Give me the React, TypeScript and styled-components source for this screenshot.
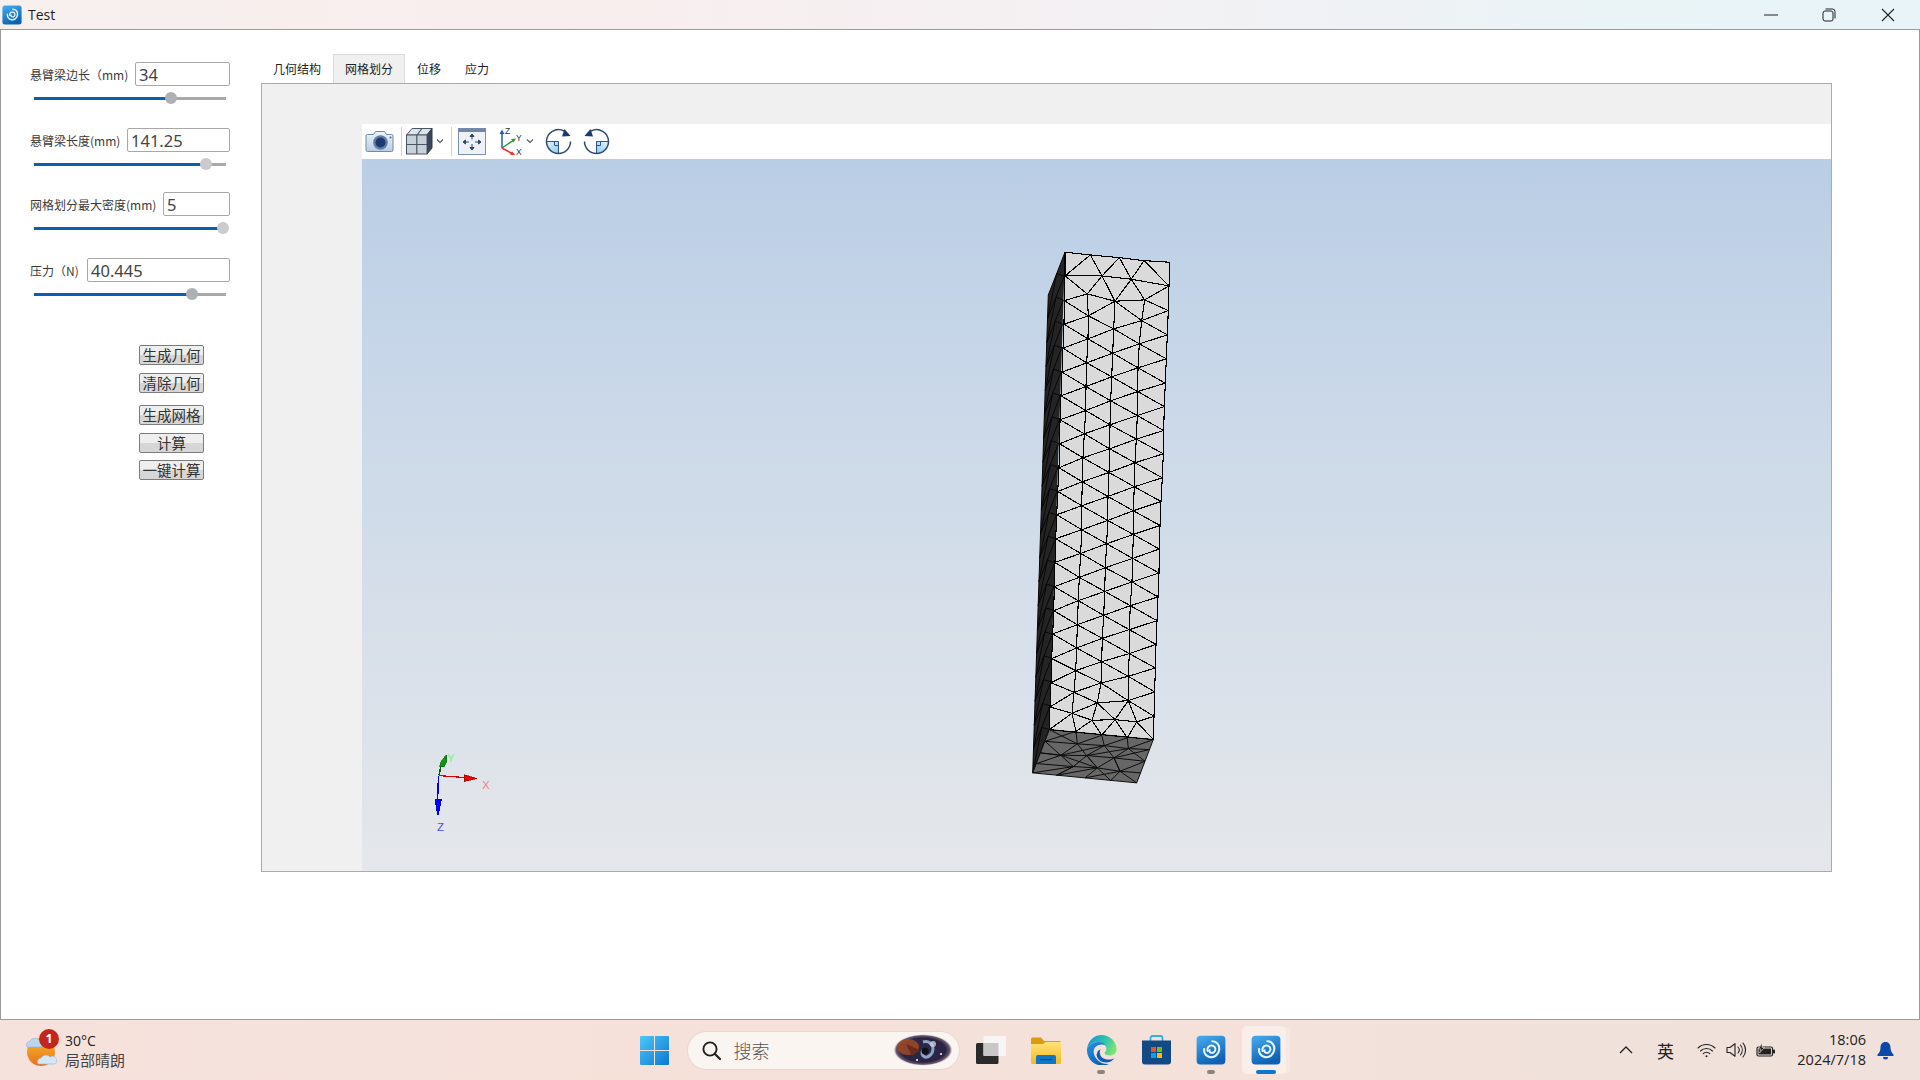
import React from "react";
import styled, { createGlobalStyle } from "styled-components";

const GlobalStyle = createGlobalStyle`
  html, body { margin: 0; padding: 0; width: 1920px; height: 1080px; overflow: hidden; background: #fff; }
  * { box-sizing: border-box; }
  body { font-family: "Noto Sans CJK SC", "Noto Sans", sans-serif; color: #222; }
`;

const Page = styled.div`
  width: 1920px; height: 1080px; display: flex; flex-direction: column;
`;
const TitleBar = styled.header`
  height: 29px; flex: none; display: flex; align-items: center; padding: 0 3px 0 2px;
  background: linear-gradient(90deg, #f7f0ed 0%, #f9eeee 30%, #f3f1f4 60%, #e8f4f7 90%, #e8f4f7 100%);
`;
const TitleText = styled.span`
  font: 14px "Open Sans", "Noto Sans", sans-serif; color: #1c1c1c; margin-left: 6px; flex: 1;
`;
const WinButton = styled.div`
  width: 58.5px; height: 29px; display: flex; align-items: center; justify-content: center;
`;
const Window = styled.div`
  flex: 1; min-height: 0; display: flex; background: #fff;
  border: 1px solid #9b9b9b; border-top-width: 1.5px; border-bottom-width: 1.5px;
`;
const Sidebar = styled.aside`
  width: 260px; flex: none; padding: 32px 31px 0 29px;
`;
const ParamGroup = styled.div<{ $top: number }>`
  margin-top: ${(p) => p.$top}px; height: 42px; display: flex; flex-direction: column;
`;
const ParamRow = styled.label`
  display: flex; align-items: center; height: 24px; flex: none;
`;
const ParamLabel = styled.span<{ $w: number }>`
  width: ${(p) => p.$w}px; flex: none; font-size: 12px; color: #3a3a3a; white-space: nowrap;
`;
const ParamInput = styled.input`
  flex: 1; min-width: 0; height: 24px; border: 1px solid #a8a8a8; border-radius: 2px; background: #fff;
  padding: 0 3px; font: 16.5px "Noto Sans", sans-serif; color: #444; outline: none;
`;
const SliderTrack = styled.div`
  margin: 5px -3px 0 4px; height: 14px; display: flex; align-items: center; flex: none; width: 192px;
  background: linear-gradient(#a9a9a9, #a9a9a9) center / 100% 3px no-repeat;
`;
const SliderFill = styled.div`
  height: 3px; background: #0b5fb0; flex: none;
`;
const SliderThumb = styled.div<{ $light?: boolean }>`
  width: 12px; height: 12px; border-radius: 50%; flex: none; margin-left: -6px;
  background: ${(p) => (p.$light ? "#cbcbcb" : "#adb1b5")};
`;
const ButtonStack = styled.div`
  display: flex; flex-direction: column; align-items: flex-start; margin-left: 109px; margin-top: 45px;
`;
const ActionButton = styled.button<{ $top: number }>`
  width: 65px; height: 20px; margin-top: ${(p) => p.$top}px; padding: 0; flex: none;
  border: 1px solid #7c7c7c; border-radius: 2px; white-space: nowrap; overflow: hidden;
  background: linear-gradient(#eeeeee 0%, #eeeeee 50%, #d6d6d6 50%, #d6d6d6 100%);
  font: 14.5px/18px "Noto Sans CJK SC", sans-serif; color: #333;
`;
const Main = styled.main`
  width: 1571px; flex: none; display: flex; flex-direction: column; padding-top: 23.5px; height: 842px;
`;
const TabBar = styled.nav`
  display: flex; height: 29px; flex: none;
`;
const Tab = styled.div<{ $active?: boolean }>`
  padding: 0 ${(p) => (p.$active ? 11 : 12)}px; height: 29px; display: flex; align-items: center;
  font-size: 12px; color: #222; white-space: nowrap;
  background: ${(p) => (p.$active ? "#f0f0f0" : "transparent")};
  border: ${(p) => (p.$active ? "1px solid #dcdcdc" : "none")};
  border-bottom: none;
`;
const TabPanel = styled.section`
  flex: 1; min-height: 0; background: #f0f0f0; border: 1px solid #ababab;
  padding: 40px 0 0 100px; display: flex;
`;
const Viewer = styled.div`
  flex: 1; min-width: 0; display: flex; flex-direction: column;
`;
const Toolbar = styled.div`
  height: 35px; flex: none; background: #fff; display: flex; align-items: center;
`;
const ToolIcon = styled.div<{ $w: number; $ml?: number }>`
  width: ${(p) => p.$w}px; margin-left: ${(p) => p.$ml ?? 0}px; height: 30px; flex: none;
  display: flex; align-items: center; justify-content: center;
`;
const ToolSep = styled.div<{ $ml: number }>`
  width: 1px; height: 29px; background: #cfd3d8; flex: none; margin-left: ${(p) => p.$ml}px;
`;
const Canvas = styled.div`
  flex: 1; min-height: 0; background: linear-gradient(#b9cde5 0%, #c6d6e8 25%, #e5e7eb 100%);
`;
const CanvasSvg = styled.svg`
  display: block; width: 100%; height: 100%;
`;
const Taskbar = styled.footer`
  height: 60px; flex: none; display: flex; align-items: center;
  background: linear-gradient(90deg, #f6e2dc 0%, #f5e1da 45%, #f0e1dc 100%);
`;
const Weather = styled.div`
  width: 626.5px; flex: none; padding-left: 25px; display: flex; align-items: center; height: 100%;
`;
const WeatherIconWrap = styled.div`
  position: relative; width: 34px; height: 36px; margin-right: 6px; flex: none;
`;
const Badge = styled.span`
  position: absolute; left: 14px; top: -3px; width: 20px; height: 20px; border-radius: 50%;
  background: #c4261d; color: #fff; font: 700 12.5px/20px "Open Sans", sans-serif; text-align: center;
`;
const WeatherText = styled.div`
  display: flex; flex-direction: column; line-height: 19px;
`;
const WeatherTemp = styled.span`
  font: 14px/19px "Open Sans", sans-serif; color: #222;
`;
const WeatherDesc = styled.span`
  font-size: 15px; line-height: 19px; color: #444;
`;
const Slot = styled.div`
  position: relative; width: 55px; height: 48px; flex: none;
  display: flex; align-items: center; justify-content: center;
  & > svg { position: relative; }
`;
const ActivePlate = styled.span`
  position: absolute; left: 3.5px; top: 0; width: 44px; height: 48px; border-radius: 5px; background: #f9eeea;
  box-shadow: 5px 0 0 -1px #f5e8e3;
`;
const Indicator = styled.span<{ $active?: boolean }>`
  position: absolute; left: 50%; bottom: 0; height: 4px;
  width: ${(p) => (p.$active ? 20 : 8)}px; margin-left: ${(p) => (p.$active ? -10 : -4)}px; border-radius: 2px;
  background: ${(p) => (p.$active ? "#0b78d1" : "#8a8584")};
`;
const SearchBox = styled.div`
  width: 273px; height: 39px; margin: 0 4px 0 5px; flex: none; border-radius: 20px;
  background: #fbf5f2; border: 1px solid #e9d5d0; display: flex; align-items: center; padding: 0 6px 0 14px;
`;
const SearchText = styled.span`
  font-size: 18px; font-weight: 300; color: #555; margin-left: 13px; flex: 1;
`;
const Tray = styled.div`
  margin-left: auto; display: flex; align-items: center; height: 100%; padding-right: 16px;
`;
const TraySlot = styled.div<{ $w: number; $mr?: number }>`
  width: ${(p) => p.$w}px; margin-right: ${(p) => p.$mr ?? 0}px; flex: none;
  display: flex; align-items: center; justify-content: center;
`;
const TrayLang = styled.span`
  font-size: 17px; color: #222; line-height: 1;
`;
const Clock = styled.div`
  display: flex; flex-direction: column; align-items: flex-end; margin-left: 13px; width: 72px;
  font: 14.5px/20px "Open Sans", sans-serif; color: #222;
`;

/* ---- mesh data, measured in 3x units from the model's top-left crop ---- */
type P = [number, number];
const L: P[] = [[135,108],[133,182],[132,253],[129,325],[126,397],[123,468],[120,540],[119,612],[117,684],[113,755],[110,825],[107,897],[105,968],[103,1041],[101,1113],[98,1183],[95,1257],[93,1329],[90,1402],[88,1470]];
const C1: P[] = [[202,162],[205,228],[204,297],[200,369],[198,440],[197,512],[193,582],[189,654],[187,726],[185,798],[185,870],[182,941],[178,1013],[175,1083],[172,1155],[170,1225],[167,1293],[162,1358],[156,1421]];
const C2: P[] = [[285,184],[281,267],[278,340],[275,411],[272,483],[270,555],[269,627],[267,698],[264,770],[263,842],[260,912],[256,984],[254,1055],[251,1127],[247,1196],[245,1266],[243,1330],[232,1390]];
const C3: P[] = [[374,180],[365,242],[358,312],[354,384],[353,455],[352,527],[349,598],[345,669],[343,741],[340,813],[340,884],[338,956],[336,1027],[331,1098],[328,1170],[328,1242],[325,1310],[325,1383]];
const R: P[] = [[447,138],[445,212],[442,285],[439,357],[436,430],[433,500],[431,572],[430,642],[427,714],[423,785],[420,857],[418,928],[417,1000],[414,1072],[411,1143],[408,1214],[406,1285],[404,1357],[402,1430],[400,1500]];
const TL: P = [135,37], TR: P = [449,67], BL: P = [88,1470], BR: P = [400,1500], BBR: P = [350,1630], BBL: P = [38,1600], SIDE_T: P = [85,165];

const frontLines: [P, P][] = [];
const poly = (ps: P[]) => { for (let i = 0; i < ps.length - 1; i++) frontLines.push([ps[i], ps[i + 1]]); };
poly([TL,[211,45],[298,53],[372,62],TR]);
poly([L[0],[211,45],[246,108],[298,53],[334,118],[372,62],R[0],TR]);
poly([L[0],[246,108],[334,118],R[0]]);
poly([L[0],C1[0],[246,108],C2[0],[334,118],C3[0],R[0]]);
poly([TL, ...L]);
poly(R); poly(C1); poly(C2); poly(C3);
for (let i = 1; i < C1.length; i++) { frontLines.push([L[i], C1[i - 1]]); frontLines.push([L[i], C1[i]]); }
for (let i = 0; i < C2.length; i++) { frontLines.push([C1[i], C2[i]]); frontLines.push([C1[i + 1], C2[i]]); }
for (let i = 0; i < C2.length; i++) { frontLines.push([C2[i], C3[i]]); if (C3[i + 1]) frontLines.push([C2[i], C3[i + 1]]); }
for (let i = 0; i < C3.length; i++) { frontLines.push([C3[i], R[i]]); frontLines.push([C3[i], R[i + 1]]); }
const F1: P = [216,1442], F2: P = [285,1440], F3: P = [350,1447], B1: P = [168,1475], B2: P = [245,1487], B3: P = [322,1495];
const C1e = C1[18], C2e = C2[17], C3e = C3[17];
poly([BL, C1e, F1, F2, F3, R[18]]);
poly([C2e, F1]); poly([C2e, F2]); poly([C3e, F2]); poly([C3e, F3]);
poly([C1e, B1, F1, B2, F2, B3, F3, BR]);
poly([BL, BR]);

const bottomLines: [P, P][] = [];
const bpoly = (ps: P[]) => { for (let i = 0; i < ps.length - 1; i++) bottomLines.push([ps[i], ps[i + 1]]); };
const LE: P[] = [[75,1505],[62,1540],[50,1572]];
const RE: P[] = [[388,1530],[375,1565],[362,1600]];
const BE: P[] = [[110,1607],[195,1615],[272,1623]];
const M1: P[] = [[172,1513],[253,1518],[325,1527]];
const M2: P[] = [[122,1547],[200,1548],[282,1555]];
const M3: P[] = [[160,1581],[232,1585],[300,1595]];
bpoly([BL, BR, BBR, BBL, BL]);
bpoly([LE[0], ...M1, RE[0]]); bpoly([LE[1], ...M2, RE[1]]); bpoly([LE[2], ...M3, RE[2]]);
bpoly([B1, M1[0], M2[0], M3[0], BE[0]]);
bpoly([B2, M1[1], M2[1], M3[1], BE[1]]);
bpoly([B3, M1[2], M2[2], M3[2], BE[2]]);
bpoly([BL, M1[0], B2]); bpoly([B1, LE[0]]); bpoly([B3, M1[1], M2[0], LE[1]]);
bpoly([BR, M1[2], M2[1], M3[0], BE[0]]); bpoly([RE[0], M2[2], M3[1], BE[0]]); bpoly([RE[1], M3[2], BE[1]]);
bpoly([M1[0], M2[1], M3[1], BE[2]]); bpoly([M1[1], M2[2], M3[2], BBR]); bpoly([M1[2], RE[1]]);
bpoly([LE[0], M2[0], M3[1]]); bpoly([LE[2], M2[0]]); bpoly([M3[0], BBL]);

const sideLines: [P, P][] = [];
for (let i = 0; i < 21; i++) {
  const t = i / 20;
  const a: P = [85 + (38 - 85) * t, 165 + (1600 - 165) * t];
  const b: P = [135 + (88 - 135) * t, 37 + (1470 - 37) * t];
  const m: P = [(a[0] + b[0]) / 2, (a[1] + b[1]) / 2];
  const t2 = Math.min(1, t + 0.05);
  const b2: P = [135 + (88 - 135) * t2, 37 + (1470 - 37) * t2];
  const a2: P = [85 + (38 - 85) * t2, 165 + (1600 - 165) * t2];
  sideLines.push([a, m], [m, b], [m, a2], [m, b2]);
}
sideLines.push([SIDE_T, BBL]);

/* canvas origin is (362,159); crop origin is (1020,240) at 3x */
const X = (p: P) => 658 + p[0] / 3;
const Y = (p: P) => 81 + p[1] / 3;
const pts = (ps: P[]) => ps.map((p) => `${X(p).toFixed(1)},${Y(p).toFixed(1)}`).join(" ");
const seg = (ls: [P, P][]) => ls.map(([a, b]) => `M${X(a).toFixed(1)} ${Y(a).toFixed(1)}L${X(b).toFixed(1)} ${Y(b).toFixed(1)}`).join("");

const MeshScene = () => (
  <CanvasSvg viewBox="0 0 1469 713" preserveAspectRatio="none">
    <polygon points={pts([TL, BL, BBL, SIDE_T])} fill="#242424" />
    <path d={seg(sideLines)} stroke="#070707" strokeWidth="1" fill="none" shapeRendering="crispEdges" />
    <polygon points={pts([TL, TR, ...R, BL, ...L.slice().reverse()])} fill="#dadada" />
    <polygon points={pts([BL, BR, BBR, BBL])} fill="#676767" />
    <path d={seg(bottomLines)} stroke="#0d0d0d" strokeWidth="1" fill="none" shapeRendering="crispEdges" />
    <path d={seg(frontLines)} stroke="#000" strokeWidth="1.1" fill="none" shapeRendering="crispEdges" />
    {/* orientation triad */}
    <g shapeRendering="crispEdges">
      <path d="M77 617 L79 607" stroke="#0a5a0a" strokeWidth="1.6" fill="none" />
      <path d="M77.500 608 L79 603 L84.500 596 L85 603 L82 608 Z" fill="#0a9a12" stroke="#075c0a" strokeWidth=".6" />
      <path d="M77 617 L103 619" stroke="#e00000" strokeWidth="1.200" fill="none" />
      <path d="M102 616 L115 620 L102 623 Z" fill="#ee0000" stroke="#8c0000" strokeWidth=".6" />
      <path d="M76.500 617 L75.500 645" stroke="#0000e0" strokeWidth="1.400" fill="none" />
      <path d="M72.500 640 L80 640 L78 650 L76 658 L74 650 Z" fill="#0000f0" />
    </g>
    <text x="85" y="603" fill="#80ee80" fontFamily="Liberation Sans, sans-serif" fontSize="11.500">Y</text>
    <text x="120" y="630" fill="#f08080" fontFamily="Liberation Sans, sans-serif" fontSize="11.500">X</text>
    <text x="75" y="672" fill="#4a4aff" fontFamily="Liberation Sans, sans-serif" fontSize="11.500">Z</text>
  </CanvasSvg>
);

/* ---- icons ---- */
const AppIcon = ({ size, bright }: { size: number; bright?: boolean }) => {
  const id = bright ? "appB" : "appA";
  return (
    <svg width={size} height={size} viewBox="0 0 24 24">
      <defs>
        <linearGradient id={id} x1="0" y1="0" x2=".4" y2="1">
          <stop offset="0" stopColor="#49aef0" />
          <stop offset="1" stopColor="#0d62b4" />
        </linearGradient>
      </defs>
      <rect x="0.500" y="0.500" width="23" height="23" rx="3" fill={`url(#${id})`} />
      <path d="M13 5c3.500 0 6 3 5.600 6.600-.4 3.900-3.700 6.700-7.300 6.100-3.200-.5-5.300-3.300-4.800-6.500" fill="none" stroke="#e8f4fd" strokeWidth="1.700" strokeLinecap="round" />
      <path d="M9.300 12.800c-.7-2.300.9-4.400 3.100-4.400 2.100 0 3.400 1.700 3.100 3.500-.3 1.800-2.100 2.900-3.700 2.200-.9-.4-1.300-1.300-.9-2" fill="none" stroke="#f0f8fe" strokeWidth="1.500" strokeLinecap="round" />
    </svg>
  );
};

const CameraIcon = () => (
  <svg width="30" height="26" viewBox="0 0 30 26">
    <defs>
      <linearGradient id="cam" x1="0" y1="0" x2="0" y2="1"><stop offset="0" stopColor="#eef3f9" /><stop offset="1" stopColor="#b9cde3" /></linearGradient>
    </defs>
    <path d="M2.500 6.500h6l2-3h9l2 3h5a1.500 1.500 0 0 1 1.500 1.500v14a1.500 1.500 0 0 1-1.500 1.500h-24a1.500 1.500 0 0 1-1.500-1.500v-14a1.500 1.500 0 0 1 1.500-1.500z" fill="url(#cam)" stroke="#6d8bb0" />
    <circle cx="15.500" cy="14.500" r="7.300" fill="#5f7fa8" />
    <circle cx="15.500" cy="14.500" r="5" fill="#1c3a70" />
    <circle cx="25.500" cy="9.500" r="1" fill="#45668f" />
  </svg>
);
const Chevron = () => (
  <svg width="8" height="6" viewBox="0 0 8 6"><path d="M1 1.500l3 3 3-3" fill="none" stroke="#4f5b68" strokeWidth="1.100" /></svg>
);
const CubeIcon = () => (
  <svg width="28" height="28" viewBox="0 0 28 28">
    <path d="M1.500 8L7 1.500h20L22 8z" fill="#dde3ea" stroke="#4a5563" />
    <path d="M22 8l5-6.500V21l-5 6z" fill="#39475a" stroke="#2e3a4a" />
    <rect x="1.500" y="8" width="20.500" height="19" fill="#c8d0d9" stroke="#4a5563" />
    <path d="M11.800 8v19M1.500 17.500H22M12 8l5-6.500" stroke="#4a5563" strokeWidth="1.200" fill="none" />
  </svg>
);
const FitIcon = () => (
  <svg width="28" height="28" viewBox="0 0 28 28">
    <rect x="0.500" y="1.500" width="27" height="26" fill="#eef2f7" stroke="#7a90ac" />
    <rect x="0.500" y="1.500" width="27" height="3.500" fill="#6f87a6" />
    <g fill="#2f4468" stroke="#2f4468" strokeWidth="1">
      <path d="M14 8.500v4M14 17v4M7 15h4M17 15h4" fill="none" />
      <path d="M14 7l-2 2.500h4zM14 23l-2-2.500h4zM5 15l2.500-2v4zM23 15l-2.500-2v4z" />
    </g>
  </svg>
);
const AxesIcon = () => (
  <svg width="26" height="30" viewBox="0 0 26 30">
    <path d="M4 22V7" stroke="#1f5fb5" strokeWidth="1.500" />
    <path d="M4 3.500L1.500 8h5z" fill="#1f5fb5" />
    <path d="M4 22l12-8" stroke="#2f9a3a" strokeWidth="1.500" />
    <path d="M18 12.500l-5 .5 2.500 3.500z" fill="#2f9a3a" />
    <path d="M4 22l11 6" stroke="#e03030" strokeWidth="1.500" />
    <path d="M17 29l-5-.3 2-3.400z" fill="#e03030" />
    <text x="7" y="8" fontSize="8.500" fontFamily="Liberation Sans, sans-serif" fill="#333">Z</text>
    <text x="18" y="15" fontSize="8.500" fontFamily="Liberation Sans, sans-serif" fill="#333">Y</text>
    <text x="18" y="29" fontSize="8.500" fontFamily="Liberation Sans, sans-serif" fill="#333">X</text>
  </svg>
);
const RotateIcon = ({ id, flip }: { id: string; flip?: boolean }) => (
  <svg width="27" height="27" viewBox="0 0 27 27" style={flip ? { transform: "scaleX(-1)" } : undefined}>
    <defs>
      <linearGradient id={id} x1="0" y1="0" x2="1" y2="1"><stop offset="0" stopColor="#e7f4fc" /><stop offset="1" stopColor="#8cc8ee" /></linearGradient>
    </defs>
    <path d="M1.500 13.500H13.500V25.500A12 12 0 0 1 1.500 13.500z" fill={`url(#${id})`} />
    <path d="M1.500 13.500H13.500V25.500M9.500 13.500v4h4" fill="none" stroke="#2a5a8c" strokeWidth="1" />
    <path d="M19 3A12 12 0 0 0 1.500 13.500A12 12 0 0 0 25.500 13.500" fill="none" stroke="#2c4a72" strokeWidth="1.500" />
    <path d="M25.500 8L17 8.500 19.500 1z" fill="#1c3a70" />
  </svg>
);
const WeatherIcon = () => (
  <svg width="34" height="36" viewBox="0 0 34 36">
    <defs>
      <linearGradient id="sun" x1="0" y1="0" x2="0" y2="1"><stop offset="0" stopColor="#f7b92c" /><stop offset="1" stopColor="#e9701c" /></linearGradient>
    </defs>
    <circle cx="16" cy="20" r="14" fill="url(#sun)" />
    <path d="M2 15a4 4 0 0 1 3-6 5.500 5.500 0 0 1 9-1 4 4 0 0 1 3 7z" fill="#bcd6ee" stroke="#8fb4d8" strokeWidth=".6" />
    <path d="M13 32a4 4 0 0 1 3-6 5.500 5.500 0 0 1 9-1 4 4 0 0 1 5 7z" fill="#d5e6f5" stroke="#92b8dc" strokeWidth=".6" />
  </svg>
);
const WinIcon = () => (
  <svg width="29" height="29" viewBox="0 0 29 29">
    <defs>
      <linearGradient id="w1" x1="0" y1="0" x2="1" y2="1"><stop offset="0" stopColor="#4cc8f8" /><stop offset="1" stopColor="#0a78d4" /></linearGradient>
    </defs>
    <path d="M0 1a1 1 0 0 1 1-1h13v14H0zM15 0h13a1 1 0 0 1 1 1v13H15zM0 15h14v14H1a1 1 0 0 1-1-1zM15 15h14v13a1 1 0 0 1-1 1H15z" fill="url(#w1)" />
  </svg>
);
const SearchIcon = () => (
  <svg width="19" height="19" viewBox="0 0 19 19"><circle cx="8" cy="8" r="6.600" fill="none" stroke="#222" strokeWidth="1.900" /><path d="M13 13l5 5" stroke="#222" strokeWidth="2.200" strokeLinecap="round" /></svg>
);
const SearchArt = () => (
  <svg width="60" height="32" viewBox="0 0 60 32">
    <defs>
      <radialGradient id="art" cx=".5" cy=".5" r=".5">
        <stop offset="0" stopColor="#2a2a4a" /><stop offset=".75" stopColor="#2c2344" /><stop offset=".9" stopColor="#6a5a70" /><stop offset="1" stopColor="#fbf5f2" stopOpacity="0" />
      </radialGradient>
    </defs>
    <ellipse cx="30" cy="16" rx="30" ry="16" fill="url(#art)" />
    <ellipse cx="15" cy="13" rx="11" ry="8" fill="#a04a24" opacity=".85" />
    <path d="M13 10l14 6-8 6z" fill="#6a2a1c" />
    <path d="M30 8c6-2 10 3 10 7s-4 9-8 8c-3-1-4-4-2-7" fill="none" stroke="#8fa3c8" strokeWidth="3" />
    <circle cx="32" cy="17" r="3.500" fill="#101018" />
    <circle cx="40" cy="10" r="3" fill="#c7cfdc" opacity=".8" />
    <circle cx="48" cy="20" r="1" fill="#fff" /><circle cx="24" cy="26" r="1" fill="#fff" />
  </svg>
);
const TaskViewIcon = () => (
  <svg width="30" height="28" viewBox="0 0 30 28">
    <rect x="0" y="7" width="22.500" height="21" rx="1.500" fill="#2a2a2a" />
    <rect x="7.500" y="0" width="22.500" height="20" rx="1.500" fill="#f8f6f5" />
    <rect x="7.500" y="7" width="15" height="13" fill="#c9c7c6" />
  </svg>
);
const FolderIcon = () => (
  <svg width="30" height="27" viewBox="0 0 30 27">
    <defs><linearGradient id="fd" x1="0" y1="0" x2="0" y2="1"><stop offset="0" stopColor="#ffe27a" /><stop offset="1" stopColor="#f6b81e" /></linearGradient></defs>
    <path d="M0 2a1.500 1.500 0 0 1 1.500-1.500H10l3 3.500h15.500a1.500 1.500 0 0 1 1.500 1.500V10H0z" fill="#dc9c10" />
    <path d="M0 7h12l2.500-2H30v20.500a1.500 1.500 0 0 1-1.500 1.500h-27A1.500 1.500 0 0 1 0 25.500z" fill="url(#fd)" />
    <path d="M5 27v-7a2 2 0 0 1 2-2h16a2 2 0 0 1 2 2v7z" fill="#0d78c8" />
    <rect x="9" y="22" width="12" height="1.300" fill="#0a4f8c" />
  </svg>
);
const EdgeIcon = () => (
  <svg width="31" height="30" viewBox="0 0 30 30">
    <defs>
      <linearGradient id="eg" x1="0" y1=".2" x2="1" y2=".6"><stop offset="0" stopColor="#1a8fd8" /><stop offset=".55" stopColor="#30c5b0" /><stop offset="1" stopColor="#7fe56c" /></linearGradient>
      <linearGradient id="eb" x1="0" y1="0" x2="1" y2="1"><stop offset="0" stopColor="#2196e6" /><stop offset="1" stopColor="#0b4da6" /></linearGradient>
    </defs>
    <path d="M15 0C23.500 0 30 6.500 30 14.500c0 3.800-3 6-6.500 6-3 0-5.500-1-5.500-2.500 0-.5.5-.8.900-1.300.5-.6 1-1.500 1-2.700 0-3.500-3.500-7-8.500-7C6 7 1.500 10.500 0.500 14 1.500 6 7.500 0 15 0z" fill="url(#eg)" />
    <path d="M0.500 14C1.500 10.500 6 7 12 7c3 0 5.500 1 7 3-3-1-8-1-10.500 2.500-2.500 3.500-1.500 9 3 13 3 2.700 7 4 11 3.500-2 1-5 1.500-7.500 1.500C6.500 30 0 23 0.500 14z" fill="url(#eb)" />
    <path d="M10 19c0 5 4.500 8.500 9.500 8.500 3.500 0 6.500-1.500 8.500-4.500-1.500 1-3.500 1.500-5.500 1.500-4.500 0-8-1.500-9-5.500-.5-2-.2-3.500.8-4.500-2.500.5-3.800 2.200-3.800 4.500z" fill="#0c5fb5" />
  </svg>
);
const StoreIcon = () => (
  <svg width="29" height="30" viewBox="0 0 29 30">
    <path d="M8.500 8V3a2 2 0 0 1 2-2h8a2 2 0 0 1 2 2v5" fill="none" stroke="#2bb0e8" strokeWidth="1.800" />
    <path d="M0 5.500h29v21a3 3 0 0 1-3 3H3a3 3 0 0 1-3-3z" fill="#124a86" />
    <rect x="9" y="12" width="5" height="5" fill="#f05022" />
    <rect x="15" y="12" width="5" height="5" fill="#7fba00" />
    <rect x="9" y="18" width="5" height="5" fill="#00a4ef" />
    <rect x="15" y="18" width="5" height="5" fill="#ffb900" />
  </svg>
);
const WifiIcon = () => (
  <svg width="19" height="15" viewBox="0 0 19 15" fill="none" stroke="#222" strokeWidth="1.100" strokeLinecap="round">
    <path d="M1 5a12 12 0 0 1 17 0M3.500 8a8.500 8.500 0 0 1 12 0M6.200 10.700a4.700 4.700 0 0 1 6.600 0" />
    <circle cx="9.500" cy="13.300" r="1" fill="#222" stroke="none" />
  </svg>
);
const SpeakerIcon = () => (
  <svg width="20" height="18" viewBox="0 0 20 18" fill="none" stroke="#222" strokeWidth="1.100" strokeLinecap="round">
    <path d="M1 6.500h3l5-3.800v12.600l-5-3.800H1z" strokeLinejoin="round" />
    <path d="M12 6a4.500 4.500 0 0 1 0 6M14.500 4a8 8 0 0 1 0 10M17 2a11 11 0 0 1 0 14" />
  </svg>
);
const BatteryIcon = () => (
  <svg width="20" height="15" viewBox="0 0 20 15">
    <rect x="1" y="4" width="15.500" height="9" rx="1.500" fill="none" stroke="#222" strokeWidth="1.200" />
    <rect x="2.500" y="5.500" width="12.500" height="6" fill="#222" />
    <rect x="17" y="6.500" width="2" height="4" rx=".8" fill="#222" />
    <path d="M6 0L2.500 6h2.500L3.500 10 8.500 4.500H6z" fill="#222" stroke="#f0e1dc" strokeWidth=".6" />
  </svg>
);
const BellIcon = () => (
  <svg width="17" height="19" viewBox="0 0 17 19">
    <path d="M8.500 1C5 1 3.500 3.500 3.500 6.500c0 3-1 5-3 7v1.500h16v-1.500c-2-2-3-4-3-7C13.500 3.500 12 1 8.500 1z" fill="#0b48a8" />
    <path d="M6 16h5a2.500 2.500 0 0 1-5 0z" fill="#0b48a8" />
  </svg>
);

const params = [
  { label: "悬臂梁边长（mm)", w: 105, value: "34", pos: 137, top: 0, light: false },
  { label: "悬臂梁长度(mm)", w: 97, value: "141.25", pos: 172, top: 24, light: true },
  { label: "网格划分最大密度(mm)", w: 133, value: "5", pos: 189, top: 22, light: true },
  { label: "压力（N)", w: 57, value: "40.445", pos: 158, top: 24, light: false },
];
const actions = [
  { text: "生成几何", top: 0 },
  { text: "清除几何", top: 8 },
  { text: "生成网格", top: 12 },
  { text: "计算", top: 8 },
  { text: "一键计算", top: 7 },
];
const tabs = ["几何结构", "网格划分", "位移", "应力"];

export default function App() {
  return (
    <Page>
      <GlobalStyle />
      <TitleBar>
        <AppIcon size={20} />
        <TitleText>Test</TitleText>
        <WinButton>
          <svg width="14" height="2" viewBox="0 0 14 2"><path d="M0 1h14" stroke="#222" strokeWidth="1" /></svg>
        </WinButton>
        <WinButton>
          <svg width="14" height="14" viewBox="0 0 14 14" fill="none" stroke="#222" strokeWidth="1"><rect x="1" y="3" width="10" height="10" rx="2" /><path d="M3.500 1h7a2.500 2.500 0 0 1 2.500 2.500v7" /></svg>
        </WinButton>
        <WinButton>
          <svg width="14" height="14" viewBox="0 0 14 14"><path d="M1 1l12 12M13 1L1 13" stroke="#222" strokeWidth="1.100" /></svg>
        </WinButton>
      </TitleBar>
      <Window>
        <Sidebar>
          {params.map((p) => (
            <ParamGroup key={p.label} $top={p.top}>
              <ParamRow>
                <ParamLabel $w={p.w}>{p.label}</ParamLabel>
                <ParamInput defaultValue={p.value} />
              </ParamRow>
              <SliderTrack>
                <SliderFill style={{ width: p.pos }} />
                <SliderThumb $light={p.light} />
              </SliderTrack>
            </ParamGroup>
          ))}
          <ButtonStack>
            {actions.map((a) => (
              <ActionButton key={a.text} $top={a.top}>{a.text}</ActionButton>
            ))}
          </ButtonStack>
        </Sidebar>
        <Main>
          <TabBar>
            {tabs.map((t, i) => (
              <Tab key={t} $active={i === 1}>{t}</Tab>
            ))}
          </TabBar>
          <TabPanel>
            <Viewer>
              <Toolbar>
                <ToolIcon $w={30} $ml={3}><CameraIcon /></ToolIcon>
                <ToolSep $ml={6} />
                <ToolIcon $w={28} $ml={3}><CubeIcon /></ToolIcon>
                <ToolIcon $w={8} $ml={3}><Chevron /></ToolIcon>
                <ToolSep $ml={7} />
                <ToolIcon $w={28} $ml={6}><FitIcon /></ToolIcon>
                <ToolIcon $w={26} $ml={12}><AxesIcon /></ToolIcon>
                <ToolIcon $w={8} $ml={2}><Chevron /></ToolIcon>
                <ToolIcon $w={27} $ml={11}><RotateIcon id="rotA" /></ToolIcon>
                <ToolIcon $w={27} $ml={11}><RotateIcon id="rotB" flip /></ToolIcon>
              </Toolbar>
              <Canvas><MeshScene /></Canvas>
            </Viewer>
          </TabPanel>
        </Main>
      </Window>
      <Taskbar>
        <Weather>
          <WeatherIconWrap>
            <WeatherIcon />
            <Badge>1</Badge>
          </WeatherIconWrap>
          <WeatherText>
            <WeatherTemp>30°C</WeatherTemp>
            <WeatherDesc>局部晴朗</WeatherDesc>
          </WeatherText>
        </Weather>
        <Slot><WinIcon /></Slot>
        <SearchBox>
          <SearchIcon />
          <SearchText>搜索</SearchText>
          <SearchArt />
        </SearchBox>
        <Slot><TaskViewIcon /></Slot>
        <Slot><FolderIcon /></Slot>
        <Slot><EdgeIcon /><Indicator /></Slot>
        <Slot><StoreIcon /></Slot>
        <Slot><AppIcon size={30} bright /><Indicator /></Slot>
        <Slot><ActivePlate /><AppIcon size={30} bright /><Indicator $active /></Slot>
        <Tray>
          <TraySlot $w={40}>
            <svg width="14" height="8" viewBox="0 0 14 8"><path d="M1 7l6-6 6 6" fill="none" stroke="#222" strokeWidth="1.300" /></svg>
          </TraySlot>
          <TraySlot $w={39} $mr={6}><TrayLang>英</TrayLang></TraySlot>
          <TraySlot $w={30}><WifiIcon /></TraySlot>
          <TraySlot $w={30}><SpeakerIcon /></TraySlot>
          <TraySlot $w={30}><BatteryIcon /></TraySlot>
          <Clock>
            <span>18:06</span>
            <span>2024/7/18</span>
          </Clock>
          <TraySlot $w={38}><BellIcon /></TraySlot>
        </Tray>
      </Taskbar>
    </Page>
  );
}
